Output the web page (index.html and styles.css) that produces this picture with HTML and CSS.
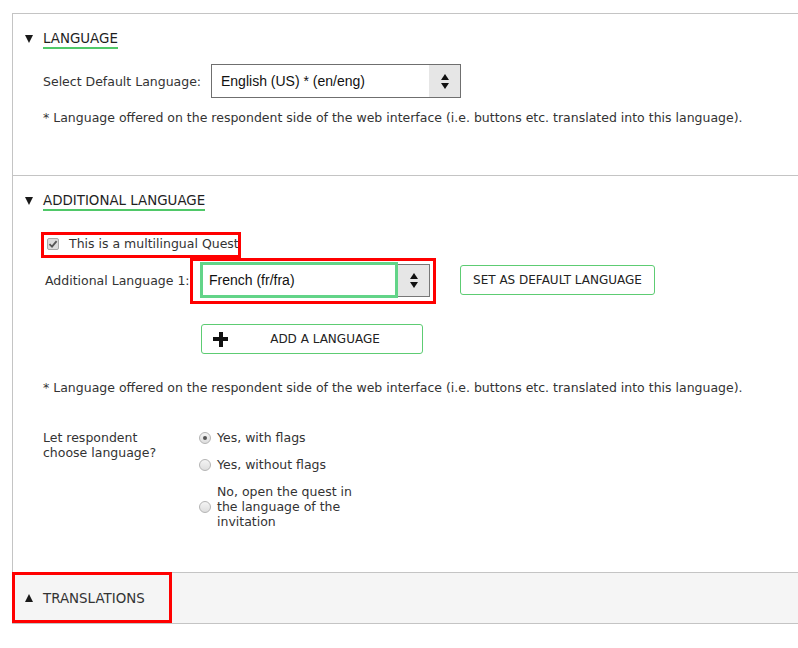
FILE: index.html
```html
<!DOCTYPE html>
<html>
<head>
<meta charset="utf-8">
<link rel="stylesheet" href="styles.css">
</head>
<body>
<div class="panel">
  <section class="section">
    <div class="heading"><span class="tri-down"></span><span class="heading-text">LANGUAGE</span></div>
    <div class="row row-default">
      <label class="label">Select Default Language:</label>
      <div class="select">
        <span class="select-value">English (US) * (en/eng)</span>
        <span class="select-arrow"><span class="arr-up"></span><span class="arr-down"></span></span>
      </div>
    </div>
    <p class="note">* Language offered on the respondent side of the web interface (i.e. buttons etc. translated into this language).</p>
  </section>

  <section class="section section-2">
    <div class="heading"><span class="tri-down"></span><span class="heading-text">ADDITIONAL LANGUAGE</span></div>
    <div class="check-row">
      <span class="checkbox"><svg viewBox="0 0 12 12" width="12" height="12"><path d="M2.5 6.2 L5 8.6 L9.6 3.2" fill="none" stroke="#555" stroke-width="1.8"/></svg></span>
      <span class="check-label">This is a multilingual Quest</span>
    </div>
    <div class="lang-row">
      <label class="label label-add">Additional Language 1:</label>
      <div class="select2">
        <span class="select2-value">French (fr/fra)</span>
        <span class="select2-arrow"><span class="arr-up"></span><span class="arr-down"></span></span>
      </div>
      <button class="btn btn-default">SET AS DEFAULT LANGUAGE</button>
    </div>
    <div class="add-row">
      <button class="btn btn-add"><span class="plus"></span><span class="btn-add-text">ADD A LANGUAGE</span></button>
    </div>
    <p class="note note-2">* Language offered on the respondent side of the web interface (i.e. buttons etc. translated into this language).</p>
    <div class="choose">
      <div class="choose-label"><span class="choose-text">Let respondent choose language?</span></div>
      <div class="radios">
        <div class="radio-opt"><span class="radio checked"></span><span class="radio-text">Yes, with flags</span></div>
        <div class="radio-opt"><span class="radio"></span><span class="radio-text">Yes, without flags</span></div>
        <div class="radio-opt"><span class="radio"></span><span class="radio-text">No, open the quest in the language of the invitation</span></div>
      </div>
    </div>
  </section>

  <section class="translations">
    <span class="tri-up"></span><span class="trans-text">TRANSLATIONS</span>
  </section>
</div>

<div class="mark mark-check"></div>
<div class="mark mark-select"></div>
<div class="mark mark-trans"></div>
</body>
</html>
```

FILE: styles.css
```css
html, body {
  margin: 0;
  padding: 0;
  background: #fff;
}
body {
  font-family: "DejaVu Sans", sans-serif;
  font-size: 12.5px;
  color: #333;
  position: relative;
  overflow: hidden;
  width: 798px;
  height: 648px;
}
.panel {
  margin: 13px 0 0 12px;
  border-top: 1px solid #c4c4c4;
  border-left: 1px solid #c4c4c4;
}
.section {
  border-bottom: 1px solid #c4c4c4;
  padding: 17px 0 48px 12px;
}
.section-2 {
  padding-top: 17px;
  padding-bottom: 43px;
}
.heading {
  display: flex;
  align-items: center;
  height: 18px;
}
.tri-down {
  width: 0;
  height: 0;
  border-left: 4px solid transparent;
  border-right: 4px solid transparent;
  border-top: 8px solid #1a1a1a;
  margin-right: 10px;
  margin-top: -2px;
}
.heading-text {
  font-size: 13.4px;
  line-height: 16px;
  color: #1f1f1f;
  border-bottom: 2px solid #4fc868;
}
.row-default {
  display: grid;
  grid-template-columns: 168px 250px;
  align-items: center;
  margin-top: 15px;
  padding-left: 18px;
}
.label {
  color: #333;
}
.select {
  display: flex;
  height: 34px;
  box-sizing: border-box;
  border: 1px solid #6f6f6f;
  font-family: "Liberation Sans", Arial, sans-serif;
  font-size: 14px;
  color: #111;
}
.select-value {
  flex: 1;
  display: flex;
  align-items: center;
  padding-left: 9px;
  background: #fff;
}
.select-arrow {
  width: 31px;
  background: #e6e6e6;
  display: flex;
  flex-direction: column;
  align-items: center;
  justify-content: center;
  gap: 3px;
}
.arr-up {
  width: 0;
  height: 0;
  border-left: 4px solid transparent;
  border-right: 4px solid transparent;
  border-bottom: 6px solid #111;
}
.arr-down {
  width: 0;
  height: 0;
  border-left: 4px solid transparent;
  border-right: 4px solid transparent;
  border-top: 6px solid #111;
}
.note {
  margin: 11px 0 0 18px;
  line-height: 18px;
  color: #333;
}
.note-2 {
  margin-top: 25px;
}
.check-row {
  display: flex;
  align-items: center;
  margin-top: 24px;
  padding-left: 22px;
  height: 16px;
}
.checkbox {
  width: 12px;
  height: 12px;
  box-sizing: border-box;
  border: 1px solid #a8a8a8;
  border-radius: 2px;
  background: #dcdcdc;
  display: flex;
  margin-top: 1px;
}
.checkbox svg {
  display: block;
  margin: -1px;
}
.check-label {
  margin-left: 10px;
  color: #333;
}
.lang-row {
  display: flex;
  align-items: center;
  margin-top: 11px;
  padding-left: 20px;
}
.label-add {
  width: 155px;
}
.select2 {
  display: flex;
  align-items: center;
  font-family: "Liberation Sans", Arial, sans-serif;
  font-size: 14px;
  color: #111;
}
.select2-value {
  width: 198px;
  height: 36px;
  box-sizing: border-box;
  border: 3px solid #62d488;
  display: flex;
  align-items: center;
  padding-left: 6px;
}
.select2-arrow {
  width: 32px;
  height: 33px;
  box-sizing: border-box;
  border: 1px solid #777;
  border-left: none;
  background: #e6e6e6;
  display: flex;
  flex-direction: column;
  align-items: center;
  justify-content: center;
  gap: 3px;
}
.btn {
  font-family: "DejaVu Sans", sans-serif;
  font-size: 12px;
  color: #222;
  background: #fff;
  border: 1px solid #5dcc73;
  border-radius: 3px;
  height: 30px;
  padding: 0;
}
.btn-default {
  margin-left: 30px;
  width: 195px;
}
.add-row {
  margin-top: 26px;
  padding-left: 176px;
}
.btn-add {
  width: 222px;
  display: flex;
  align-items: center;
  padding-left: 11px;
}
.plus {
  width: 15px;
  height: 15px;
  background:
    linear-gradient(#111, #111) center / 15px 4px no-repeat,
    linear-gradient(#111, #111) center / 4px 15px no-repeat;
}
.btn-add-text {
  flex: 1;
  text-align: center;
}
.choose {
  display: flex;
  margin-top: 33px;
  padding-left: 18px;
  line-height: 15px;
}
.choose-label {
  width: 156px;
}
.choose-text {
  display: block;
  width: 125px;
}
.radios {
  display: flex;
  flex-direction: column;
  gap: 12px;
}
.radio-opt {
  display: flex;
  align-items: center;
}
.radio {
  width: 12px;
  height: 12px;
  box-sizing: border-box;
  border: 1px solid #b4b4b4;
  border-radius: 50%;
  background: linear-gradient(#f4f4f4, #dedede);
  margin-right: 6px;
  flex: none;
  position: relative;
}
.radio.checked::after {
  content: "";
  position: absolute;
  left: 3px;
  top: 3px;
  width: 4px;
  height: 4px;
  border-radius: 50%;
  background: #555;
}
.radio-text {
  width: 142px;
}
.translations {
  display: flex;
  align-items: center;
  height: 50px;
  background: #f5f5f5;
  border-bottom: 1px solid #c4c4c4;
  padding-left: 12px;
}
.tri-up {
  width: 0;
  height: 0;
  border-left: 4px solid transparent;
  border-right: 4px solid transparent;
  border-bottom: 8px solid #1a1a1a;
  margin-right: 10px;
}
.trans-text {
  font-size: 13.4px;
  color: #333;
}
.mark {
  position: absolute;
  border: 3px solid #ff0000;
  box-sizing: border-box;
}
.mark-check {
  left: 41px;
  top: 232px;
  width: 200px;
  height: 26px;
}
.mark-select {
  left: 190px;
  top: 258px;
  width: 246px;
  height: 46px;
}
.mark-trans {
  left: 12px;
  top: 572px;
  width: 160px;
  height: 51px;
}
```
